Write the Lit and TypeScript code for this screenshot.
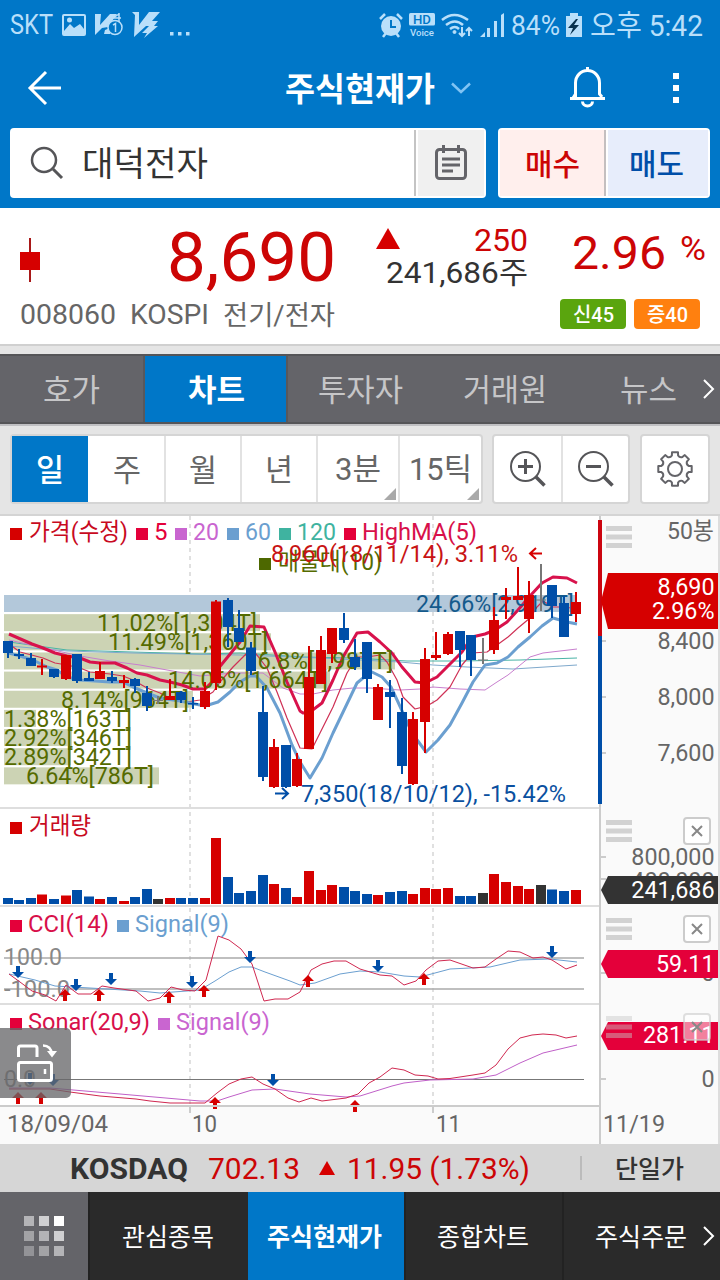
import { LitElement, html, svg, css } from "lit";
import { customElement } from "lit/decorators.js";

type Pt = [number, number];

const RED = "#d60000";
const BLUE = "#004ea8";
const GRAY = "#777777";
const CRIMSON = "#e4003a";
const OLIVE = "#556b00";
const SKY = "#6b9fd0";
const VIOLET = "#c965d0";

/** Text set to an exact advance width, vertically centred; Hangul sits a pixel lower. */
const fit = (text: string, w: number, size: number, cls = "") => html`<svg
  class="fit ${cls}" width=${w} height=${size * 1.19}
><text x="0" y=${size * 0.95 + (/^[가-힣]/.test(text) ? 1 : 0)} font-size=${size} textLength=${w} lengthAdjust="spacingAndGlyphs">${text}</text></svg>`;

/** colour, body top, body bottom, wick top, wick bottom, volume top */
const CANDLES: [string, number, number, number, number, number][] = [
  ["b", 641, 653, 641, 658, 898], ["b", 654, 656, 649, 659, 900], ["b", 658, 666, 653, 666, 898],
  ["r", 665.5, 667.5, 659, 675, 894.5], ["b", 669, 677, 669, 678, 899], ["r", 655, 679, 655, 680, 895.5],
  ["b", 654, 681, 654, 683, 890], ["b", 678, 681, 672, 681, 896.5], ["r", 671, 679, 662, 679, 899],
  ["b", 677, 681, 671, 683, 897], ["r", 680, 683, 675, 688, 901], ["b", 679, 686, 678, 693, 897],
  ["b", 693, 706, 686, 711, 889], ["g", 700, 701, 696, 704, 899], ["r", 696, 700, 679, 700, 898],
  ["b", 692, 700, 691, 703, 898], ["b", 703, 704.5, 697, 709, 898], ["r", 691, 707, 682, 709, 898],
  ["r", 601.5, 683, 600, 690, 838], ["b", 600, 627, 598, 647, 877], ["b", 628, 642, 610, 642, 893],
  ["b", 647.5, 671, 642, 675, 891], ["b", 712, 777, 686, 781, 875], ["r", 747, 787, 739, 788, 884],
  ["b", 745, 787, 745, 788, 888], ["r", 759, 786, 753, 787, 897], ["r", 677, 749, 646, 749, 871],
  ["r", 650, 684, 636, 684, 890], ["r", 628, 654, 628, 663, 885], ["b", 628, 640, 613, 643, 887],
  ["b", 657, 667, 639, 670, 891], ["b", 642, 679, 642, 693, 894], ["r", 687, 720, 684, 720, 895],
  ["b", 692, 697, 680, 728, 892], ["b", 712, 766, 698, 774, 891], ["r", 719, 784, 712, 785, 894],
  ["r", 659, 722, 648, 753, 888], ["r", 655, 658, 632, 660, 889], ["r", 634, 654, 632, 655, 888],
  ["b", 631, 650, 631, 667, 896], ["b", 635, 660, 635, 676, 896], ["g", 659.5, 660.5, 638, 664, 893],
  ["r", 620, 650, 607, 654, 874], ["r", 597, 600, 588, 619, 882], ["r", 596, 600, 567, 600, 886],
  ["r", 595, 619, 581, 633, 889], ["g", 599.5, 600.5, 564, 611, 885], ["b", 585, 606, 585, 618, 889.5],
  ["b", 603, 637, 596, 637, 891], ["r", 602, 614, 592, 622, 890],
];
const FILL: Record<string, string> = { r: RED, b: BLUE, g: GRAY };
const cx = (i: number) => Math.floor(8.1 + i * 11.59);

/** band end x, label, label x, label width */
const PROFILE: [number, string, number, number][] = [
  [577, "24.66%[2,919T]", 416, 158], [260, "11.02%[1,304T]", 97, 160], [271, "11.49%[1,360T]", 108, 160],
  [395, "16.8%[1,987T]", 244, 149], [330, "14.06%[1,664T]", 168, 160], [193, "8.14%[964T]", 61, 128],
  [36, "1.38%[163T]", 4, 128], [72, "2.92%[346T]", 4, 128], [71, "2.89%[342T]", 4, 128],
  [159, "6.64%[786T]", 26, 128],
];

const HIGH_MA: Pt[] = [[9, 634], [32, 644], [43, 648], [55, 653], [67, 656], [80, 658], [90, 662], [100, 663], [115, 663], [127, 668], [137, 673], [147, 675], [160, 680], [170, 682], [182, 685], [193, 689], [205, 689], [212, 682], [217, 670], [240, 642], [250, 626], [264, 627], [275, 652], [287, 682], [300, 711], [303, 713], [310, 712], [322, 703], [333, 680], [343, 657], [357, 633], [368, 632], [380, 642], [392, 653], [402, 667], [415, 682], [425, 683], [437, 677], [450, 664], [462, 652], [472, 637], [485, 634], [495, 630], [507, 622], [518, 610], [530, 596], [542, 583], [553, 577], [567, 578], [577, 583]];
const LOW_MA: Pt[] = [[9, 653], [20, 656], [33, 660], [47, 667], [57, 670], [67, 677], [80, 680], [110, 682], [123, 682], [133, 687], [147, 693], [160, 698], [180, 701], [190, 703], [205, 706], [218, 702], [230, 692], [240, 682], [250, 676], [256, 676], [267, 688], [280, 713], [292, 745], [300, 762], [310, 778], [322, 758], [333, 733], [345, 708], [357, 683], [363, 678], [372, 672], [382, 677], [391, 687], [398, 702], [412, 733], [426, 752], [438, 740], [450, 725], [462, 703], [473, 682], [485, 665], [497, 663], [508, 657], [518, 647], [530, 637], [542, 626], [553, 618], [567, 622], [577, 624]];
const MA5: Pt[] = [[9, 644], [20, 652], [43, 658], [55, 663], [67, 665], [80, 668], [90, 672], [110, 674], [123, 676], [133, 680], [147, 688], [160, 693], [173, 700], [187, 702], [200, 700], [213, 692], [220, 682], [233, 667], [247, 653], [253, 650], [267, 668], [277, 692], [287, 718], [300, 748], [312, 749], [320, 733], [333, 707], [347, 673], [357, 657], [367, 657], [380, 655], [387, 662], [397, 680], [403, 697], [415, 709], [427, 706], [437, 700], [450, 687], [462, 665], [472, 653], [487, 652], [497, 645], [508, 637], [518, 628], [530, 618], [537, 607], [543, 601], [553, 607], [567, 607], [577, 610]];
const MA20: Pt[] = [[9, 640], [80, 656], [110, 661], [140, 665], [167, 670], [200, 676], [233, 673], [263, 673], [283, 688], [300, 694], [313, 694], [333, 690], [353, 688], [370, 688], [400, 690], [420, 689], [433, 687], [460, 689], [485, 690], [497, 682], [508, 675], [530, 657], [543, 653], [560, 651], [577, 649]];
const MA60: Pt[] = [[9, 646], [67, 651], [133, 653], [240, 655], [320, 658], [400, 662], [433, 665], [467, 667], [513, 669], [577, 665]];
const MA120: Pt[] = [[9, 642], [67, 650], [133, 652], [200, 654], [240, 653], [303, 657], [353, 658], [407, 661], [460, 661], [520, 660], [577, 658]];
const CCI: Pt[] = [[9, 974], [20, 982], [32, 991], [45, 995], [56, 1001], [66, 985], [78, 994], [91, 994], [102, 986], [114, 988], [136, 991], [148, 1001], [160, 998], [171, 987], [183, 990], [195, 991], [206, 980], [218, 936], [229, 940], [241, 949], [252, 964], [264, 1001], [275, 999], [288, 999], [300, 992], [311, 970], [322, 964], [334, 961], [346, 961], [360, 969], [380, 975], [392, 976], [404, 985], [416, 981], [426, 970], [438, 961], [450, 960], [473, 968], [485, 967], [496, 959], [508, 951], [520, 952], [533, 958], [543, 957], [552, 960], [566, 969], [577, 965]];
const CCI_SIG: Pt[] = [[9, 974], [35, 980], [55, 986], [90, 988], [140, 991], [160, 993], [200, 990], [215, 981], [229, 972], [241, 967], [252, 967], [265, 972], [290, 981], [300, 985], [315, 983], [340, 974], [360, 971], [380, 972], [404, 976], [420, 977], [450, 969], [490, 967], [520, 960], [550, 959], [577, 962]];
const SONAR: Pt[] = [[9, 1089], [50, 1089], [70, 1092], [100, 1096], [136, 1099], [150, 1101], [170, 1103], [205, 1103], [217, 1093], [229, 1084], [241, 1079], [252, 1077], [263, 1084], [275, 1089], [288, 1098], [299, 1102], [311, 1098], [322, 1101], [346, 1098], [358, 1094], [369, 1083], [380, 1077], [392, 1068], [404, 1070], [415, 1075], [428, 1076], [438, 1079], [450, 1078.5], [473, 1075], [485, 1073], [496, 1065], [508, 1049], [520, 1038], [532, 1035], [543, 1034], [556, 1035], [566, 1038], [577, 1036]];
const SONAR_SIG: Pt[] = [[9, 1088], [50, 1088], [120, 1094], [200, 1101], [217, 1101], [229, 1097], [252, 1090], [275, 1089], [310, 1094], [346, 1097], [360, 1096], [392, 1086], [404, 1083], [430, 1080], [473, 1079], [496, 1075], [520, 1063], [543, 1053], [577, 1045]];

const line = (pts: Pt[], stroke: string, w = 1) =>
  svg`<polyline points=${pts.map((p) => p.join(",")).join(" ")} fill="none" stroke=${stroke} stroke-width=${w} stroke-linejoin="round"></polyline>`;
const label = (x: number, y: number, text: string, fill: string, w: number, size = 24) =>
  svg`<text x=${x} y=${y} font-size=${size} fill=${fill} textLength=${w} lengthAdjust="spacingAndGlyphs">${text}</text>`;
const right = (y: number, text: string, fill: string) =>
  svg`<text x="714.500" y=${y} font-size="23.300" fill=${fill} text-anchor="end">${text}</text>`;
const key = (x: number, y: number, fill: string) => svg`<rect x=${x} y=${y} width="12" height="12" fill=${fill}></rect>`;
const down = (x: number, y: number) =>
  svg`<path d="M${x - 2} ${y - 6}h4v6h4l-6 6l-6-6h4z" fill=${BLUE}></path>`;
const up = (x: number, y: number) =>
  svg`<path d="M${x - 2} ${y + 6}h4v-6h4l-6-6l-6 6h4z" fill=${RED}></path>`;
const grip = (y: number) =>
  svg`<path d="M606 ${y + 2.5}h26M606 ${y + 11}h26M606 ${y + 19.5}h26" stroke="#c8c8c8" stroke-opacity=${y > 1000 ? 0.45 : 0.8} stroke-width="5"></path>`;
const close = (y: number, o = 1) =>
  svg`<rect x="684" y=${y} width="26" height="26" rx="3" fill="#fff" fill-opacity=${o} stroke="#ccc" stroke-opacity=${o === 1 ? 1 : 0.6} stroke-width="2"></rect>
  <path d="M692 ${y + 8}l10 10m0 -10l-10 10" stroke="#888" stroke-width="2"></path>`;
const tag = (y: number, h: number, fill: string) =>
  svg`<path d="M601 ${y + h / 2}L608 ${y}H718V${y + h}H608Z" fill=${fill}></path>`;

@customElement("stock-chart")
export class StockChart extends LitElement {
  static styles = css`
    :host { display: block; height: 628px; }
    svg { display: block; font-family: Roboto, "Noto Sans CJK KR", sans-serif; }
  `;

  render() {
    return html`<svg width="720" height="628" viewBox="0 516 720 628">
      <rect x="0" y="516" width="720" height="628" fill="#fafafa"></rect>
      <rect x="0" y="516" width="599" height="590" fill="#fff"></rect>
      <path d="M190 516V1105M433 516V1105" stroke="#e0e0e0" stroke-width="2" stroke-dasharray="4 4"></path>
      ${PROFILE.map(([x], i) => svg`<rect x="4" y=${595 + i * 19.15} width=${x - 4} height="17" fill=${i ? "#ccd3b4" : "#b3c8da"}></rect>`)}

      ${key(10, 528, RED)}${label(29, 540, "가격(수정)", "#c80a1e", 99)}
      ${key(136, 528, CRIMSON)}${label(154, 540, "5", CRIMSON, 13.5)}
      ${key(175, 528, VIOLET)}${label(193, 540, "20", VIOLET, 26)}
      ${key(227, 528, SKY)}${label(245, 540, "60", SKY, 26)}
      ${key(279, 528, "#3fb3a0")}${label(297, 540, "120", "#3fb3a0", 39)}
      ${key(344, 528, CRIMSON)}${label(362, 540, "HighMA(5)", "#d8104a", 115)}
      ${key(259, 558, "#4d6800")}${label(278, 570, "매물대(10)", OLIVE, 104)}
      ${label(271, 562, "8,960(18/11/14), 3.11%", "#c81414", 247)}
      <path d="M542 553.500H531M536 548l-6 5.500l6 5.500" stroke=${RED} stroke-width="2" fill="none"></path>

      ${line(MA120, "#49b3a6")}${line(MA60, "#7fa9cc")}${line(MA20, "#c87fce")}
      ${line(MA5, "#cf3156", 1.2)}${line(LOW_MA, SKY, 3)}${line(HIGH_MA, "#d8124c", 3)}
      ${PROFILE.map(([, t, x, w], i) => label(x, 611.5 + i * 19.2, t, i ? OLIVE : "#145a8c", w))}
      ${CANDLES.map(([c, a, b, h, l], i) => svg`<rect x=${cx(i) - 1} y=${h} width="2" height=${l - h} fill=${FILL[c]}></rect>
        <rect x=${cx(i) - 5} y=${a} width="10" height=${Math.max(b - a, 1)} fill=${FILL[c]}></rect>`)}
      <path d="M275 793.500h12M282 788l6 5.500l-6 5.500" stroke=${BLUE} stroke-width="2" fill="none"></path>
      ${label(301, 802, "7,350(18/10/12), -15.42%", "#0a50a0", 265)}

      ${key(10, 822, RED)}${label(29, 834, "거래량", "#c80a1e", 62)}
      ${CANDLES.map(([c, , , , , v], i) => svg`<rect x=${cx(i) - 5} y=${v} width="10" height=${904 - v} fill=${c === "g" ? "#333" : FILL[c]}></rect>`)}

      ${key(10, 920, CRIMSON)}${label(28, 932, "CCI(14)", "#d8104a", 81)}
      ${key(117, 920, SKY)}${label(135, 932, "Signal(9)", SKY, 94)}
      <path d="M4 958H584M4 989H584" stroke="#aaa" stroke-width="1.500"></path>
      ${label(4, 965, "100.0", "#888", 58)}${label(4, 997, "-100.0", "#888", 66)}
      ${line(CCI_SIG, SKY)}${line(CCI, "#d02850")}
      ${down(18, 972)}${down(76, 985)}${down(111, 979)}${down(192, 982)}${down(250, 957)}${down(378, 966)}${down(552, 952)}
      ${up(65, 995)}${up(99, 995)}${up(169, 997)}${up(204, 991)}${up(308, 981)}${up(424, 979)}

      ${key(10, 1018, CRIMSON)}${label(28, 1030, "Sonar(20,9)", "#d8104a", 122)}
      ${key(158, 1018, VIOLET)}${label(176, 1030, "Signal(9)", VIOLET, 94)}
      <path d="M4 1079.500H584" stroke="#777"></path>
      ${label(4, 1087, "0.0", "#888", 32)}
      ${line(SONAR_SIG, "#c060c8")}${line(SONAR, "#d02850")}
      ${down(30, 1079)}${down(53, 1080)}${down(273, 1080)}
      ${up(18, 1098)}${up(41, 1098)}${up(215, 1103)}${up(355, 1106)}

      <path d="M0 808H599M0 906H599M0 1004H599" stroke="#dedede" stroke-width="2"></path>
      <path d="M0 1106H599" stroke="#ccc" stroke-width="2"></path>
      <path d="M600 516V1144M190 1107v6M433 1107v6" stroke="#ccc" stroke-width="2"></path>
      <path d="M601 641h5M601 697h5M601 753h5M601 857h5M601 879h5M601 973h5M601 1079h5" stroke="#ccc" stroke-width="2"></path>
      <path d="M719 516V1144" stroke="#ddd" stroke-width="2"></path>
      <path d="M600 520V636" stroke="#cc0510" stroke-width="4"></path>
      <path d="M600 636V804" stroke=${BLUE} stroke-width="4"></path>

      ${label(7, 1132, "18/09/04", "#666", 101)}${label(192, 1132, "10", "#666", 25)}
      ${label(436, 1132, "11", "#666", 25)}${label(603, 1132, "11/19", "#666", 62)}

      ${label(667, 539, "50봉", "#666", 47)}
      ${right(649, "8,400", "#666")}${right(705, "8,000", "#666")}${right(761, "7,600", "#666")}
      ${right(865, "800,000", "#666")}${right(889, "400,000", "#666")}${right(981, "0", "#666")}${right(1087, "0", "#666")}
      ${tag(573, 56, RED)}${right(595, "8,690", "#fff")}${right(619, "2.96%", "#fff")}
      ${tag(876, 28, "#333")}${right(898, "241,686", "#fff")}
      ${tag(950, 28, CRIMSON)}${right(972, "59.11", "#fff")}
      ${tag(1022, 28, CRIMSON)}${right(1043, "281.11", "#fff")}
      ${grip(526)}${grip(820)}${grip(918)}${grip(1016)}
      ${close(818)}${close(916)}${close(1014, 0.5)}

      <path d="M0 1028H66a5 5 0 0 1 5 5V1093a5 5 0 0 1 -5 5H0Z" fill="#67676a" fill-opacity=".77"></path>
      <g fill="none" stroke="#fff" stroke-width="3">
        <path d="M18.500 1057V1048a2 2 0 0 1 2-2H35a2 2 0 0 1 2 2V1057"></path>
        <rect x="18.500" y="1062.500" width="33" height="18" rx="2"></rect>
        <path d="M45 1069v5M43 1045.500q8 0 9 9" stroke-width="2.500"></path>
        <path d="M47 1051h10l-5 6.500z" fill="#fff" stroke="none"></path>
      </g>
    </svg>`;
  }
}

@customElement("app-root")
export class AppRoot extends LitElement {
  static styles = css`
    :host { display: flex; flex-direction: column; width: 720px; height: 1280px; overflow: hidden; background: #fff; font-family: Roboto, "Noto Sans CJK KR", sans-serif; color: #333; }
    * { box-sizing: border-box; }
    svg { display: block; flex: none; overflow: visible; }
    .fit { fill: currentColor; }
    .bold { font-weight: 700; }
    .medium { font-weight: 500; }
    .red { color: #cc0505; }
    .head { background: #0077c8; height: 208px; flex: none; }
    .status { height: 48px; display: flex; align-items: center; padding: 1px 0 0 10px; color: #b9dffa; }
    .left, .right { display: flex; align-items: center; }
    .left { gap: 9px; }
    .right { margin-left: 190px; gap: 6px; }
    .clock { margin-left: 2px; }
    .title { height: 80px; display: grid; grid-template-columns: 285px 150px 135px 103px 47px; align-items: center; color: #fff; }
    .title .back { margin-left: 27px; }
    .title .chev { margin-left: 16px; }
    .search { display: flex; gap: 12px; padding: 0 10px; height: 70px; }
    .box, .trade { background: #fff; border-radius: 4px; display: flex; }
    .box { width: 476px; }
    .query { width: 406px; display: flex; align-items: center; gap: 18px; padding-left: 20px; border-right: 2px solid #c4c4c4; margin: 2px 0; }
    .memo { flex: 1; margin: 2px; background: #f0f0f0; display: flex; align-items: center; justify-content: center; }
    .trade { width: 212px; padding: 2px; }
    .trade div { display: flex; align-items: center; justify-content: center; }
    .trade .buy { flex: none; width: 106px; background: #ffefed; border-right: 2px solid #c4bfc0; color: #cc0505; }
    .trade .sell { flex: 1; background: #e7edfb; color: #004ea8; margin-left: 2px; padding-right: 3px; }
    .quote { height: 138px; flex: none; border-bottom: 2px solid #d0d0d0; padding: 0 14px 0 20px; }
    .prices { height: 80px; display: flex; align-items: center; }
    .prices .candle { margin-top: 24px; }
    .price { margin: 17px 0 0 127px; }
    .diff { width: 152px; margin: 16px 0 0 40px; display: flex; flex-direction: column; align-items: flex-end; }
    .diff .row { display: flex; justify-content: space-between; align-items: center; height: 32px; }
    .diff .up { width: 152px; }
    .diff .up svg:first-child { margin-top: -3px; }
    .rate { display: flex; margin: 8px 0 0 44px; gap: 14px; }
    .rate .fit + .fit { margin-top: 5px; }
    .meta { display: flex; align-items: center; height: 52px; gap: 14px; color: #666; }
    .tags { display: flex; gap: 8px; margin: -1px 6px 0 auto; }
    .tag { width: 66px; height: 30px; border-radius: 4px; display: flex; align-items: center; justify-content: center; color: #fff; background: #5aa50e; }
    .tag.o { background: #ff800f; }
    .gap { height: 8px; background: #e5e5e5; flex: none; }
    .tabs { height: 70px; flex: none; display: grid; grid-template-columns: 145px 143px 144px 145px 143px; background: #646469; color: #c6c6c8; border-top: 2px solid #555558; border-bottom: 2px solid #555558; }
    .tabs div { display: flex; align-items: center; justify-content: center; }
    .tabs div:first-child, .tabs .on { border-right: 2px solid #58585c; }
    .tabs .on { background: #0077c8; color: #fff; padding-left: 2px; }
    .tabs .last { justify-content: flex-start; padding-left: 43px; gap: 26px; border: 0; }
    .tools { height: 92px; flex: none; background: #e5e5e5; border-top: 2px solid #c0c0c3; border-bottom: 2px solid #d4d4d4; padding: 8px 10px 11px 10px; display: flex; color: #666; }
    .group { display: flex; background: #fff; border: 2px solid #d5d5d5; border-radius: 4px; height: 70px; }
    .group div { display: flex; align-items: center; justify-content: center; width: 76px; border-right: 2px solid #e2e2e2; position: relative; }
    .group div:last-child { border-right: 0; }
    .group .on { width: 78px; background: #0077c8; color: #fff; border-right-color: #fff; }
    .group .wide { width: 82px; }
    .group .wide:last-child { width: 81px; }
    .corner { position: absolute; right: 2px; bottom: 2px; border: 6.500px solid; border-color: transparent #a9a9a9 #a9a9a9 transparent; }
    .zoom { margin-left: 9px; width: 138px; }
    .zoom div { width: 69px; }
    .zoom div:last-child { width: 65px; }
    .gear { margin-left: 10px; width: 70px; }
    .gear div { width: 66px; }
    .index { height: 48px; flex: none; background: #d6d6d6; display: flex; align-items: center; padding-left: 70px; }
    .nav { height: 88px; flex: none; display: grid; grid-template-columns: 88px 160px 156px 158px 158px; background: #2a2a2a; color: #fff; }
    .nav > div { display: flex; align-items: center; justify-content: center; border-left: 2px solid #222; padding-right: 3px; }
    .nav .menu { background: #646469; border: 0; padding: 0; }
    .nav .on { background: #0077c8; border: 0; }
    .nav .last { justify-content: flex-start; padding-left: 31px; gap: 16px; }
    .ml1 { margin-left: 20px; } .ml2 { margin-left: 19px; } .ml3 { margin-left: 12px; } .ml4 { margin-left: 50px; } .ml5 { margin-left: 33px; }
  `;

  private statusBar() {
    return html`<div class="status">
      <div class="left">
        ${fit("SKT", 43, 27)}
        <svg width="24" height="22"><path fill-rule="evenodd" fill="#b9dffa" d="M2 0H22a2 2 0 0 1 2 2V20a2 2 0 0 1-2 2H2a2 2 0 0 1-2-2V2A2 2 0 0 1 2 0ZM2 2V17l6-7 4 4 6-4 4 5V2ZM5 6a2.500 2.500 0 1 1 5 0a2.500 2.500 0 1 1-5 0"></path></svg>
        <svg width="28" height="24" fill="#b9dffa"><path d="M0 1H6L5 12L15 1H22L13 14L7 15L0 22ZM10 17l5-2v6h-6z"></path><path d="M18 5h8M24 0v10M18 5l6-4" stroke="#b9dffa" stroke-width="1.500" fill="none"></path><circle cx="20" cy="14.500" r="7" fill="#0077c8" stroke="#b9dffa" stroke-width="1.500"></circle><path d="M18 12l2.500-1.500V19" stroke="#b9dffa" stroke-width="1.500" fill="none"></path></svg>
        <svg width="28" height="26" fill="#b9dffa"><path d="M0 0H7V13L17 0H28L20 9H26L22 14H26L12 26L15 21H10L17 14H14L2 25L3 3Z"></path></svg>
        <svg width="20" height="24"><path d="M1 19h3.500v3.500h-3.500zM9 19h3.500v3.500h-3.500zM17 19h3.500v3.500h-3.500z" fill="#b9dffa"></path></svg>
      </div>
      <div class="right">
        <svg width="24" height="24"><circle cx="12" cy="13" r="10" fill="#b9dffa"></circle><path d="M1 6l5-5M23 6l-5-5M4 24l3-4M20 24l-3-4" stroke="#b9dffa" stroke-width="2.500"></path><path d="M12 7v7h5" stroke="#0077c8" stroke-width="2" fill="none"></path></svg>
        <svg width="26" height="24"><rect width="26" height="12.500" rx="1.500" fill="#b9dffa"></rect><text x="4" y="10.500" font-size="12" font-weight="500" fill="#0077c8" textLength="18" lengthAdjust="spacingAndGlyphs">HD</text><text x="1" y="23" font-size="9.500" font-weight="500" fill="#b9dffa" textLength="24" lengthAdjust="spacingAndGlyphs">Voice</text></svg>
        <svg width="32" height="24" fill="none" stroke="#b9dffa" stroke-width="2.500"><path d="M1 7q12-10 26 0M5 12q9-7 17 0M9 16q5-4 9 0"></path><circle cx="13.500" cy="19" r="1.500" fill="#b9dffa" stroke-width="1"></circle><path d="M21 14v9M18 20l3 3l3-3M28 23v-8M25 18l3-3l3 3" stroke-width="2"></path></svg>
        <svg width="26" height="24" fill="#b9dffa"><path d="M1 24h5v-5zM8 15h3v9h-3zM15 8h3v16h-3zM22 2l3-2v24h-3z"></path></svg>
        ${fit("84%", 49, 28)}
        <svg width="16" height="24"><path d="M4 0h8v3h4v21H0V3h4z" fill="#b9dffa"></path><path d="M10 6L2 15h5l-3 7l9-10H8l4-6z" fill="#08324f"></path></svg>
        ${fit("오후 5:42", 113, 29, "clock")}
      </div>
    </div>`;
  }

  private header() {
    return html`<div class="head">
      ${this.statusBar()}
      <div class="title">
        <svg class="back" width="36" height="36" fill="none" stroke="#fff" stroke-width="3"><path d="M19 2L3 18L19 34M3 18H34"></path></svg>
        ${fit("주식현재가", 150, 32.5, "bold")}
        <svg class="chev" width="20" height="12" fill="none" stroke="#80c4f4" stroke-width="2.500"><path d="M1 1.500L10 10L19 1.500"></path></svg>
        <svg width="36" height="42" fill="none" stroke="#fff" stroke-width="3"><path d="M17.500 0v4M5.500 31V16a12 12.500 0 0 1 24 0v11l2.500 3M0 31.500H35M5.500 27l-2.500 4"></path><path d="M12.500 34.500a5 4.500 0 0 0 10 0"></path></svg>
        <svg width="6" height="30" fill="#fff"><path d="M0 0h6v6H0zM0 12h6v6H0zM0 24h6v6H0z"></path></svg>
      </div>
      <div class="search">
        <div class="box">
          <div class="query">
            <svg width="34" height="34" fill="none" stroke="#555558" stroke-width="2.500"><circle cx="14" cy="14" r="12"></circle><path d="M23 23L32 32" stroke-width="3"></path></svg>
            ${fit("대덕전자", 126, 34)}
          </div>
          <div class="memo"><svg width="32" height="36" fill="none" stroke="#646469" stroke-width="3"><rect x="1.500" y="4.500" width="29" height="29" rx="3"></rect><path d="M8.500 0v8M23.500 0v8M7 14H25M7 20H25M7 26H18"></path></svg></div>
        </div>
        <div class="trade">
          <div class="buy">${fit("매수", 55, 30, "medium")}</div>
          <div class="sell">${fit("매도", 55, 30, "medium")}</div>
        </div>
      </div>
    </div>`;
  }

  private quote() {
    return html`<div class="quote">
      <div class="prices">
        <svg class="candle" width="20" height="44"><path d="M10 0V44" stroke="#a81818" stroke-width="2"></path><path d="M0 14h20v18H0z" fill="#d60000"></path></svg>
        <div class="price red">${fit("8,690", 169, 69)}</div>
        <div class="diff">
          <div class="row up red"><svg width="24" height="21"><path d="M12 0L24 21H0z" fill="#d60000"></path></svg>${fit("250", 54, 31)}</div>
          <div class="row">${fit("241,686주", 142, 30)}</div>
        </div>
        <div class="rate red">${fit("2.96", 94, 47)}${fit("%", 26, 33)}</div>
      </div>
      <div class="meta">
        ${fit("008060", 96, 28)}${fit("KOSPI", 79, 28)}${fit("전기/전자", 112, 27)}
        <div class="tags"><div class="tag">${fit("신45", 41, 20, "medium")}</div><div class="tag o">${fit("증40", 41, 20, "medium")}</div></div>
      </div>
    </div>`;
  }

  private lens(sign: string) {
    return html`<svg width="36" height="36" fill="none" stroke="#555558" stroke-width="2"><circle cx="15.500" cy="15.500" r="14.500"></circle><path d=${sign} stroke-width="3"></path><path d="M26 26L34.500 34.500" stroke-width="3.500"></path></svg>`;
  }

  private gear() {
    const teeth = Array.from({ length: 8 }, (_, i) => {
      const pt = (r: number, d: number) => {
        const a = ((i * 45 + d - 90) * Math.PI) / 180;
        return `${(18 + r * Math.cos(a)).toFixed(1)} ${(18 + r * Math.sin(a)).toFixed(1)}`;
      };
      return `${i ? "L" : "M"}${pt(17, -10)}L${pt(17, 10)}L${pt(14, 13)}Q${pt(12, 22.5)} ${pt(14, 32)}`;
    }).join("");
    return html`<svg width="36" height="36" fill="none" stroke="#646469" stroke-width="2" stroke-linejoin="round"><path d="${teeth}Z"></path><circle cx="18" cy="18" r="7"></circle></svg>`;
  }

  render() {
    return html`
      ${this.header()}${this.quote()}
      <div class="gap"></div>
      <div class="tabs">
        <div>${fit("호가", 57, 31)}</div><div class="on">${fit("차트", 57, 31, "bold")}</div>
        <div>${fit("투자자", 85, 31)}</div><div>${fit("거래원", 84, 31)}</div>
        <div class="last">${fit("뉴스", 57, 31)}<svg width="12" height="20" fill="none" stroke="#fff" stroke-width="2"><path d="M1 1L10 10L1 19"></path></svg></div>
      </div>
      <div class="tools">
        <div class="group">
          <div class="on">${fit("일", 28, 31, "medium")}</div><div>${fit("주", 28, 31)}</div><div>${fit("월", 28, 31)}</div><div>${fit("년", 28, 31)}</div>
          <div class="wide">${fit("3분", 46, 31)}<span class="corner"></span></div><div class="wide">${fit("15틱", 63, 31)}<span class="corner"></span></div>
        </div>
        <div class="group zoom"><div>${this.lens("M8 15.500h15M15.500 8v15")}</div><div>${this.lens("M8 15.500h15")}</div></div>
        <div class="group gear"><div>${this.gear()}</div></div>
      </div>
      <stock-chart></stock-chart>
      <div class="index">
        ${fit("KOSDAQ", 118, 29, "bold")}
        <span class="ml1 red">${fit("702.13", 92, 29)}</span>
        <svg class="ml2" width="16" height="14"><path d="M8 0L16 14H0z" fill="#d60000"></path></svg>
        <span class="ml3 red">${fit("11.95 (1.73%)", 183, 29)}</span>
        <svg class="ml4" width="2" height="24"><path d="M1 0V24" stroke="#bbb" stroke-width="2"></path></svg>
        <span class="ml5">${fit("단일가", 69, 25, "medium")}</span>
      </div>
      <div class="nav">
        <div class="menu"><svg width="40" height="40">
          ${["#b4b4b7", "#d0d0d2", "#fff", "#a3a3a6", "#b4b4b7", "#d0d0d2", "#939397", "#a3a3a6", "#b4b4b7"].map(
            (c, i) => svg`<rect x=${(i % 3) * 15} y=${Math.floor(i / 3) * 15} width="10" height="10" fill=${c}></rect>`
          )}
        </svg></div>
        <div>${fit("관심종목", 92, 25)}</div><div class="on">${fit("주식현재가", 115, 25, "bold")}</div>
        <div>${fit("종합차트", 92, 25)}</div>
        <div class="last">${fit("주식주문", 92, 25)}<svg width="12" height="20" fill="none" stroke="#fff" stroke-width="2"><path d="M1 1L10 10L1 19"></path></svg></div>
      </div>`;
  }
}
